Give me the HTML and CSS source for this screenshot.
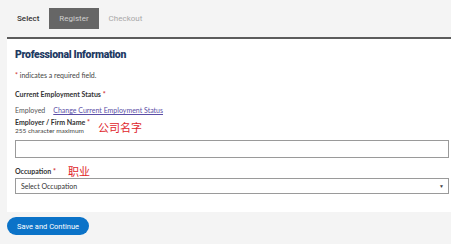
FILE: index.html
```html
<!DOCTYPE html>
<html lang="en">
<head>
<meta charset="utf-8">
<link rel="stylesheet" href="styles.css">
</head>
<body>
<div class="page">
  <nav class="tabs">
    <span class="tab tab-done">Select</span>
    <span class="tab tab-active">Register</span>
    <span class="tab tab-next">Checkout</span>
  </nav>
  <section class="card">
    <h2 class="title">Professional Information</h2>
    <p class="note"><span class="req">*</span> indicates a required field.</p>

    <div class="field">
      <div class="label">Current Employment Status <span class="req">*</span></div>
      <div class="status"><span class="status-value">Employed</span><a class="link" href="#">Change Current Employment Status</a></div>
    </div>

    <div class="field field-firm">
      <div class="label-row">
        <div class="label-stack">
          <div class="label">Employer / Firm Name <span class="req">*</span></div>
          <div class="hint">255 character maximum</div>
        </div>
        <span class="cn cn-firm">公司名字</span>
      </div>
      <div class="input"></div>
    </div>

    <div class="field field-occ">
      <div class="label-row label-row-occ">
        <div class="label">Occupation <span class="req">*</span></div>
        <span class="cn cn-occ">职业</span>
      </div>
      <div class="select"><span class="select-text">Select Occupation</span><span class="caret">▼</span></div>
    </div>
  </section>
  <div class="actions">
    <button class="btn" type="button">Save and Continue</button>
  </div>
</div>
</body>
</html>
```
FILE: styles.css
```css
html, body {
  margin: 0;
  padding: 0;
  background: #ffffff;
}
.page {
  width: 451px;
  height: 244px;
  background: #f4f4f4;
  overflow: hidden;
}
.tabs {
  margin-left: 7px;
  height: 37px;
  display: flex;
  align-items: center;
  border-bottom: 2px solid #5c5c5c;
  font-family: Roboto, "Liberation Sans", sans-serif;
  font-size: 8px;
}
.tab {
  padding: 0 10px;
  height: 21px;
  display: flex;
  align-items: center;
}
.tab-done {
  color: #333333;
  font-weight: 500;
}
.tab-active {
  background: #666666;
  color: #cfcfcf;
}
.tab-next {
  color: #a8a8a8;
}
.card {
  margin-left: 7px;
  background: #ffffff;
  padding: 9px 2px 0 8px;
  height: 173px;
  box-sizing: border-box;
  font-family: Lato, "Open Sans", sans-serif;
  color: #333333;
}
.title {
  margin: 0;
  font-family: Roboto, "Liberation Sans", sans-serif;
  font-weight: 900;
  font-size: 10.5px;
  letter-spacing: -0.3px;
  line-height: 14px;
  color: #1e3a63;
}
.note {
  margin: 9px 0 0;
  font-size: 7px;
  line-height: 9px;
  color: #444;
}
.req {
  color: #d0332f;
}
.field {
  margin-top: 10px;
}
.label {
  font-size: 7px;
  line-height: 9px;
  font-weight: 700;
  color: #333;
}
.status {
  margin-top: 7px;
  font-size: 7px;
  line-height: 9px;
  display: flex;
  gap: 8px;
}
.status-value {
  color: #555;
}
.link {
  color: #5b4ea6;
  text-decoration: underline;
}
.field-firm {
  margin-top: 3px;
}
.label-row {
  display: flex;
  align-items: flex-end;
  gap: 8px;
}
.hint {
  font-size: 6.5px;
  line-height: 8px;
  color: #444;
}
.cn {
  font-family: "Noto Sans CJK SC", sans-serif;
  color: #e0262b;
  line-height: 14px;
}
.cn-firm {
  font-size: 11px;
  margin-bottom: 1px;
}
.cn-occ {
  font-size: 11px;
}
.label-row-occ {
  align-items: center;
  gap: 12px;
}
.input {
  margin-top: 5px;
  height: 18px;
  border: 1px solid #9a9a9a;
  box-sizing: border-box;
  background: #fff;
}
.field-occ {
  margin-top: 6px;
}
.select {
  margin-top: 0;
  height: 16px;
  border: 1px solid #9a9a9a;
  box-sizing: border-box;
  display: flex;
  align-items: center;
  justify-content: space-between;
  padding: 0 4px 0 5px;
  font-size: 7px;
  color: #333;
}
.caret {
  font-size: 5px;
  color: #444;
}
.actions {
  margin-left: 7px;
  margin-top: 5px;
}
.btn {
  display: block;
  width: 82px;
  height: 18px;
  border: none;
  border-radius: 9px;
  background: #0b73c8;
  color: #ffffff;
  font-family: Roboto, "Liberation Sans", sans-serif;
  font-size: 7.5px;
  padding: 0;
}
```
